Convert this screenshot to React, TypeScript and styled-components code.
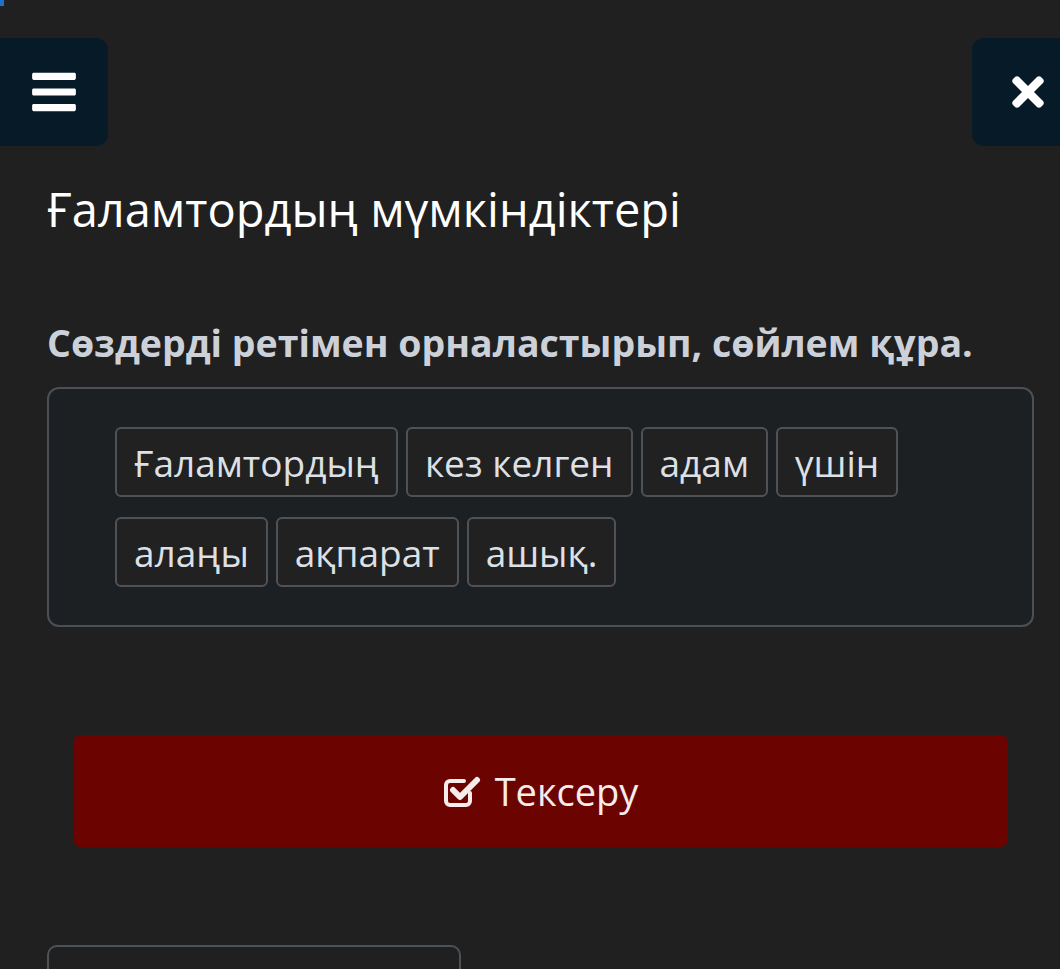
import styled, { createGlobalStyle } from "styled-components";
import { FaBars, FaTimes } from "react-icons/fa";

const GlobalStyle = createGlobalStyle`
  html, body {
    margin: 0;
    padding: 0;
    background: #202020;
    font-family: "Open Sans", "Noto Sans", sans-serif;
    overflow: hidden;
  }
`;

const words = ["Ғаламтордың", "кез келген", "адам", "үшін", "алаңы", "ақпарат", "ашық."];

// fa-check-square-o (font awesome 4 look)
const CheckSquareIcon = () => (
  <svg width="38" height="36" viewBox="0 0 38 36" fill="none">
    <path
      d="M27 20v8a4 4 0 0 1-4 4H7a4 4 0 0 1-4-4V12a4 4 0 0 1 4-4h14"
      stroke="currentColor"
      strokeWidth="4"
      strokeLinecap="round"
    />
    <path
      d="M10 17l7 7L34 7"
      stroke="currentColor"
      strokeWidth="6"
      strokeLinecap="round"
      strokeLinejoin="round"
    />
  </svg>
);

const App = () => {
  return (
    <Page>
      <GlobalStyle />
      <Corner />
      <TopBar>
        <NavButton $side="left">
          <FaBars size={50} />
        </NavButton>
        <NavButton $side="right">
          <FaTimes size={46} />
        </NavButton>
      </TopBar>
      <Content>
        <Title>Ғаламтордың мүмкіндіктері</Title>
        <Task>Сөздерді ретімен орналастырып, сөйлем құра.</Task>
        <WordBox>
          <Words>
            {words.map((w) => (
              <Chip key={w}>{w}</Chip>
            ))}
          </Words>
        </WordBox>
        <CheckButton>
          <CheckSquareIcon />
          <span>Тексеру</span>
        </CheckButton>
        <NextBox />
      </Content>
    </Page>
  );
};

export default App;

const Page = styled.div`
  position: relative;
  min-height: 969px;
  background: #202020;
`;

const Corner = styled.div`
  position: absolute;
  top: 0;
  left: 0;
  width: 4px;
  height: 6px;
  background: #1f6fd0;
`;

const TopBar = styled.header`
  display: flex;
  justify-content: space-between;
  padding-top: 38px;
`;

const NavButton = styled.button<{ $side: "left" | "right" }>`
  width: 128px;
  height: 108px;
  border: none;
  border-radius: 12px;
  background: #061a28;
  color: #fff;
  display: flex;
  align-items: center;
  padding: 0;
  ${({ $side }) =>
    $side === "left"
      ? "margin-left: -20px; justify-content: flex-end; padding-right: 29px;"
      : "margin-right: -40px; justify-content: flex-start; padding-left: 33px;"}
`;

const Content = styled.main`
  padding: 0 26px 0 47px;
`;

const Title = styled.h1`
  margin: 35px 0 0;
  font-size: 47px;
  font-weight: 400;
  line-height: 1.2;
  color: #ffffff;
`;

const Task = styled.h2`
  margin: 83px 0 0;
  font-size: 37.5px;
  font-weight: 700;
  line-height: 1.2;
  color: #ccd1d9;
`;

const WordBox = styled.section`
  margin-top: 22px;
  background: #1d2023;
  border: 2px solid #4a5056;
  border-radius: 12px;
  padding: 38px 66px;
`;

const Words = styled.div`
  display: flex;
  flex-wrap: wrap;
  gap: 20px 8px;
`;

const Chip = styled.div`
  height: 70px;
  box-sizing: border-box;
  display: flex;
  align-items: center;
  padding: 0 17px;
  background: #212121;
  border: 2px solid #4e5256;
  border-radius: 6px;
  font-size: 37px;
  color: #dde0e6;
`;

const CheckButton = styled.button`
  margin: 108px 0 0 26px;
  width: 935px;
  height: 112px;
  border: none;
  border-radius: 8px;
  background: #6b0401;
  color: #f6ecec;
  display: flex;
  align-items: center;
  justify-content: center;
  gap: 14px;
  font-family: "Open Sans", "Noto Sans", sans-serif;
  font-size: 38px;
`;

const NextBox = styled.div`
  margin-top: 98px;
  width: 410px;
  height: 60px;
  border: 2px solid #4c5358;
  border-radius: 10px;
`;
